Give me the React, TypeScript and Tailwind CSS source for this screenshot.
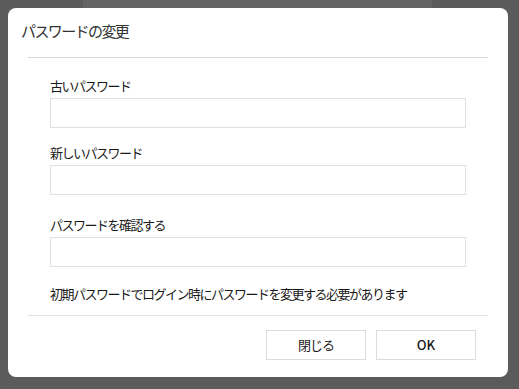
import React from "react";

const font = { fontFamily: '"Noto Sans CJK JP", "Noto Sans", sans-serif' };

const Field = ({ label, top }: { label: string; top: string }) => (
  <>
    <div className={`${top} h-[20px] text-[13px] leading-[20px] tracking-[-1.5px] text-[#1a1a1a]`}>{label}</div>
    <input
      type="password"
      className="mt-[2px] h-[30px] w-full border border-[#e0e0e0] bg-white outline-none"
    />
  </>
);

const App = () => {
  return (
    <div className="h-[389px] w-[519px] overflow-hidden bg-[#5b5b5b]" style={font}>
      <div className="flex h-[8px]">
        <div className="w-[83px] bg-[#5b5b5b]" />
        <div className="flex-1 bg-[#646464]" />
        <div className="w-[87px] bg-[#5b5b5b]" />
      </div>
      <div className="ml-[8px] flex h-[369px] w-[500px] flex-col rounded-[8px] bg-white">
        <div className="h-[49px] pl-[13px] pt-[13px] text-[15px] leading-[20px] tracking-[-1.6px] text-[#333]">
          パスワードの変更
        </div>
        <div className="mx-[20px] h-px bg-[#d6d6d6]" />
        <div className="flex flex-col px-[42px]">
          <Field label="古いパスワード" top="mt-[18px]" />
          <Field label="新しいパスワード" top="mt-[15px]" />
          <Field label="パスワードを確認する" top="mt-[20px]" />
          <div className="mt-[17px] h-[20px] text-[13px] leading-[20px] tracking-[-1.5px] text-[#1a1a1a]">
            初期パスワードでログイン時にパスワードを変更する必要があります
          </div>
        </div>
        <div className="mx-[20px] mt-[11px] h-px bg-[#e4e4e4]" />
        <div className="mt-[14px] flex justify-end gap-[10px] pr-[32px]">
          <button className="h-[30px] w-[100px] border border-[#dcdcdc] bg-white text-[13px] tracking-[-1px] text-[#1a1a1a]">
            閉じる
          </button>
          <button className="h-[30px] w-[100px] border border-[#dcdcdc] bg-white text-[13px] font-medium text-[#1a1a1a]">
            OK
          </button>
        </div>
      </div>
    </div>
  );
};

export default App;
